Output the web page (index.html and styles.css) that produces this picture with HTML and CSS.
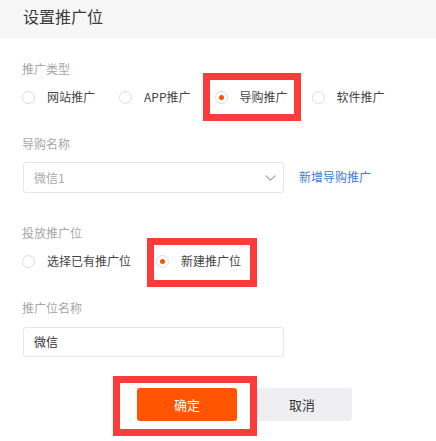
FILE: index.html
```html
<!DOCTYPE html>
<html lang="zh">
<head>
<meta charset="utf-8">
<title>设置推广位</title>
<link rel="stylesheet" href="styles.css">
</head>
<body>
<div class="header"><span class="title">设置推广位</span></div>
<div class="form">
  <div class="label lbl-1">推广类型</div>
  <div class="radios row-1">
    <span class="opt"><i class="radio"></i><span>网站推广</span></span>
    <span class="opt"><i class="radio"></i><span>APP推广</span></span>
    <span class="opt mark-a"><i class="radio on"></i><span>导购推广</span></span>
    <span class="opt"><i class="radio"></i><span>软件推广</span></span>
  </div>

  <div class="label lbl-2">导购名称</div>
  <div class="select-row">
    <div class="select">
      <span class="placeholder">微信1</span>
      <svg class="chev" width="11" height="6" viewBox="0 0 11 6"><path d="M0.5 0.5 L5.5 5.2 L10.5 0.5" fill="none" stroke="#a8a8a8" stroke-width="1.1"/></svg>
    </div>
    <a class="link">新增导购推广</a>
  </div>

  <div class="label lbl-3">投放推广位</div>
  <div class="radios row-2">
    <span class="opt"><i class="radio"></i><span>选择已有推广位</span></span>
    <span class="opt mark-b"><i class="radio on"></i><span>新建推广位</span></span>
  </div>

  <div class="label lbl-4">推广位名称</div>
  <div class="input">微信</div>

  <div class="buttons">
    <button class="btn btn-ok mark-c">确定</button>
    <button class="btn btn-cancel">取消</button>
  </div>
</div>
</body>
</html>
```
FILE: styles.css
```css
* { box-sizing: border-box; }
html, body { margin: 0; padding: 0; background: #fff; }
body {
  font-family: "Noto Sans CJK SC", "Noto Sans", sans-serif;
  width: 436px;
  height: 441px;
  overflow: hidden;
}
.header {
  height: 38px;
  background: #f7f7f7;
  padding: 5px 0 0 23px;
}
.title {
  font-size: 16px;
  line-height: 22px;
  color: #3a3a3a;
  display: block;
}
.form { padding: 0 0 0 22px; }
.label {
  font-size: 12px;
  line-height: 16px;
  color: #a6a6a6;
}
.lbl-1 { margin-top: 23px; }
.lbl-2 { margin-top: 31px; }
.lbl-3 { margin-top: 32px; }
.lbl-4 { margin-top: 31px; }
.radios {
  display: flex;
  align-items: center;
  height: 16px;
  margin-top: 12px;
  gap: 24px;
}
.row-2 { gap: 25px; }
.opt {
  position: relative;
  display: flex;
  align-items: center;
  gap: 12px;
  font-size: 12px;
  line-height: 16px;
  color: #444;
}
.radio {
  display: block;
  width: 13px;
  height: 13px;
  border: 1px solid #dcdcdc;
  border-radius: 50%;
  background: #fff;
  position: relative;
}
.radio.on::after {
  content: "";
  position: absolute;
  left: 3px;
  top: 3px;
  width: 5px;
  height: 5px;
  border-radius: 50%;
  background: #ff5000;
}
.mark-a::before, .mark-b::before, .mark-c::before {
  content: "";
  position: absolute;
  border: 7px solid #fc3b3b;
  pointer-events: none;
}
.mark-a::before { left: -12px; right: -13px; top: -16px; bottom: -16px; }
.mark-b::before { left: -9px; right: -16px; top: -15px; bottom: -18px; }
.select-row {
  display: flex;
  align-items: center;
  margin-top: 10px;
}
.select {
  margin-left: 1px;
  width: 261px;
  height: 31px;
  border: 1px solid #e6e6e6;
  border-radius: 3px;
  display: flex;
  align-items: center;
  justify-content: space-between;
  padding: 0 7px 0 10px;
}
.placeholder { font-size: 12px; color: #a8a8a8; }
.chev { display: block; margin-top: 1px; }
.link {
  margin-left: 15px;
  font-size: 12px;
  color: #3b7ddd;
  margin-top: -3px;
}
.input {
  margin-top: 11px;
  margin-left: 1px;
  width: 261px;
  height: 30px;
  border: 1px solid #e6e6e6;
  border-radius: 3px;
  padding: 0 10px;
  font-size: 12px;
  line-height: 28px;
  color: #333;
}
.buttons {
  display: flex;
  gap: 15px;
  margin-top: 31px;
  padding-left: 115px;
}
.btn {
  width: 100px;
  height: 33px;
  border: none;
  border-radius: 3px;
  font-family: inherit;
  font-size: 13px;
  padding: 0;
}
.btn-ok {
  position: relative;
  background: #ff5500;
  color: #fff;
}
.btn-cancel {
  background: #efeff1;
  color: #333;
}
.mark-c::before { left: -24px; right: -20px; top: -12px; bottom: -15px; }
```
